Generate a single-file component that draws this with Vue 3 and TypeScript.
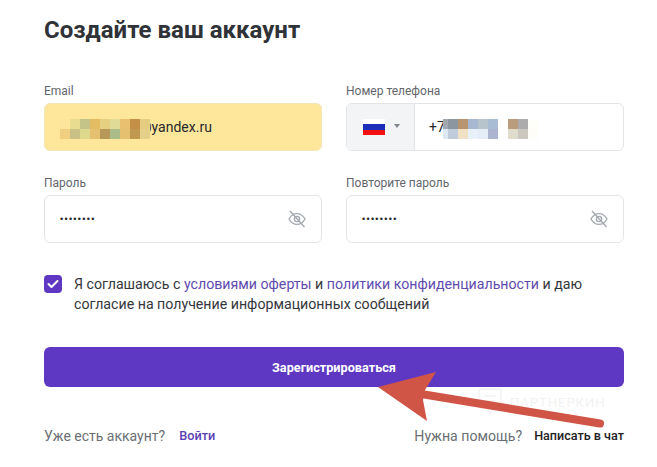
<script setup lang="ts">
// цвета пикселизации (замазанные email и телефон)
const emailBlur = [
  '#fde59c', '#e8dc90', '#c4c488', '#e4bc64', '#e4d080', '#e0dc98', '#e8c070', '#c49048', '#e4cc80',
  '#f0d080', '#c8c084', '#dcd88c', '#e4c070', '#b89858', '#acbc88', '#e4c070', '#c09850', '#e4d088',
]
const phoneBlur = [
  '#a0a8b0', '#8c96a0', '#b89470', '#a8b8d0', '#b8c4cc', '#a8bcd4',
  '#dce8f4', '#c0ccdc', '#f0e0c4', '#e8f0fa', '#e4ecf6', '#acb4d0',
]
const phoneBlurTail = ['#b89c7c', '#acacac', '#fffffa', '#e0dccc', '#ccc8c0', '#fffdf8']
</script>

<template>
  <div class="page">
    <h1 class="title">Создайте ваш аккаунт</h1>

    <div class="fields">
      <div class="field">
        <label class="label">Email</label>
        <div class="input input-filled">
          <span class="blur blur-email">
            <i v-for="(c, i) in emailBlur" :key="i" :style="{ background: c }" />
          </span>
          <span class="value value-email">@yandex.ru</span>
        </div>
      </div>

      <div class="field">
        <label class="label">Номер телефона</label>
        <div class="input input-phone">
          <div class="country">
            <span class="flag"><i class="white" /><i class="blue" /><i class="red" /></span>
            <span class="caret" />
          </div>
          <span class="value value-phone">+7</span>
          <span class="blur blur-phone">
            <i v-for="(c, i) in phoneBlur" :key="i" :style="{ background: c }" />
          </span>
          <span class="blur blur-phone-tail">
            <i v-for="(c, i) in phoneBlurTail" :key="i" :style="{ background: c }" />
          </span>
        </div>
      </div>

      <div class="field">
        <label class="label">Пароль</label>
        <div class="input">
          <span class="dots">••••••••</span>
          <svg class="eye" width="20" height="20" viewBox="0 0 20 20" fill="none">
            <path d="M2 10c2-3.600 4.800-5.400 8-5.400s6 1.800 8 5.400c-2 3.600-4.800 5.400-8 5.400S4 13.600 2 10Z" />
            <circle cx="10" cy="10" r="2.600" />
            <path d="M3 2l14.500 16" />
          </svg>
        </div>
      </div>

      <div class="field">
        <label class="label">Повторите пароль</label>
        <div class="input">
          <span class="dots">••••••••</span>
          <svg class="eye" width="20" height="20" viewBox="0 0 20 20" fill="none">
            <path d="M2 10c2-3.600 4.800-5.400 8-5.400s6 1.800 8 5.400c-2 3.600-4.800 5.400-8 5.400S4 13.600 2 10Z" />
            <circle cx="10" cy="10" r="2.600" />
            <path d="M3 2l14.500 16" />
          </svg>
        </div>
      </div>
    </div>

    <div class="agree">
      <span class="check">
        <svg width="12" height="10" viewBox="0 0 12 10" fill="none">
          <path d="M1.500 5l3 3 6-6" stroke="#fff" stroke-width="2" stroke-linecap="round" stroke-linejoin="round" />
        </svg>
      </span>
      <p class="agree-text">
        Я соглашаюсь с <a class="link">условиями оферты</a> и <a class="link">политики конфиденциальности</a> и даю
        согласие на получение информационных сообщений
      </p>
    </div>

    <button class="submit">Зарегистрироваться</button>

    <div class="footer">
      <div class="footer-side">
        <span class="muted">Уже есть аккаунт?</span>
        <a class="login">Войти</a>
      </div>
      <div class="footer-side">
        <span class="muted help">Нужна помощь?</span>
        <a class="chat">Написать в чат</a>
      </div>
    </div>

    <!-- водяной знак и стрелка поверх скриншота -->
    <div class="watermark">
      <svg width="24" height="28" viewBox="0 0 24 28" fill="none" stroke="#f2f2f2" stroke-width="1.500">
        <rect x="1" y="1" width="22" height="19" rx="2" />
        <path d="M6 8h12M6 13h12M9 20l3 6 3-6" />
      </svg>
      <span>ПАРТНЕРКИН</span>
    </div>
    <svg class="arrow" width="657" height="467" viewBox="0 0 657 467">
      <path d="M418 393.500L600 423.500" stroke="#d15546" stroke-width="8" stroke-linecap="round" fill="none" />
      <polygon points="378,387 436,372 425,390 423,400 427,421" fill="#d15546" />
    </svg>
  </div>
</template>

<style>
html, body {
  margin: 0;
  background: #fff;
}
</style>

<style scoped>
.page {
  position: relative;
  width: 657px;
  height: 467px;
  padding: 16px 33px 0 44px;
  box-sizing: border-box;
  overflow: hidden;
  font-family: Roboto, "Liberation Sans", sans-serif;
  color: #2b2f36;
}

.title {
  margin: 0;
  font-size: 24px;
  line-height: 28px;
  font-weight: 700;
  color: #2f3237;
}

.fields {
  display: grid;
  grid-template-columns: 278px 278px;
  column-gap: 24px;
  row-gap: 25px;
  margin-top: 40px;
}

.label {
  display: block;
  font-size: 12px;
  line-height: 14px;
  margin-bottom: 5px;
  color: #62666c;
}

.input {
  display: flex;
  align-items: center;
  height: 48px;
  box-sizing: border-box;
  padding: 0 14px 0 15px;
  border: 1px solid #e3e4e6;
  border-radius: 6px;
  background: #fff;
}

.input-filled {
  background: #fee79b;
  border-color: #f0e6b8;
}

.input-phone {
  padding: 0;
  overflow: hidden;
}

.value {
  font-size: 14px;
  color: #26282c;
}

.value-email {
  margin-left: -11px;
}

.value-phone {
  margin-left: 14px;
}

.country {
  display: flex;
  align-items: center;
  width: 68px;
  height: 100%;
  box-sizing: border-box;
  padding-left: 16px;
  background: #f3f4f6;
  border-right: 1px solid #e3e4e6;
}

.flag {
  display: flex;
  flex-direction: column;
  width: 22px;
  height: 16px;
}

.flag i {
  flex: 1;
}

.flag .white { background: #fff; }
.flag .blue { background: #1c2fb8; }
.flag .red { background: #f21010; }

.caret {
  width: 0;
  height: 0;
  margin-left: 9px;
  margin-bottom: 3px;
  border-left: 3px solid transparent;
  border-right: 3px solid transparent;
  border-top: 4px solid #7f858c;
}

/* пикселизация лежит поверх текста значения */
.blur {
  position: relative;
  z-index: 1;
  display: grid;
  grid-auto-rows: 10px;
  flex: none;
  margin-top: 4px;
}

.blur i {
  display: block;
}

.blur-email {
  grid-template-columns: repeat(9, 10px);
}

.blur-phone {
  grid-template-columns: 5px repeat(5, 10px);
  margin-left: -2px;
}

.blur-phone-tail {
  grid-template-columns: repeat(3, 10px);
  margin-left: 10px;
}

.dots {
  font-family: "Liberation Sans", sans-serif;
  font-size: 9px;
  letter-spacing: 1.300px;
  color: #26282c;
}

.eye {
  margin-left: auto;
}

.eye path,
.eye circle {
  stroke: #a6abb2;
  stroke-width: 1.400;
}

.agree {
  display: flex;
  align-items: flex-start;
  margin-top: 32px;
}

.check {
  display: flex;
  align-items: center;
  justify-content: center;
  flex: none;
  width: 18px;
  height: 18px;
  border-radius: 4px;
  background: #5e38c2;
  margin-right: 12px;
}

.agree-text {
  margin: -1px 0 0;
  font-size: 14.180px;
  line-height: 20px;
  color: #33363b;
}

.link {
  color: #5f4bb0;
}

.submit {
  display: block;
  width: 580px;
  height: 40px;
  margin-top: 33px;
  padding: 0;
  border: 0;
  border-radius: 6px;
  background: #5e38c2;
  color: #fff;
  font-family: inherit;
  font-size: 12.700px;
  font-weight: 700;
}

.footer {
  display: flex;
  justify-content: space-between;
  margin-top: 41px;
  line-height: 16px;
}

.footer-side {
  display: flex;
  align-items: center;
}

.muted {
  font-size: 14px;
  color: #6b6f75;
}

.help {
  font-size: 14.150px;
}

.login {
  margin-left: 14px;
  font-size: 12.700px;
  font-weight: 500;
  color: #5b3fb5;
}

.chat {
  margin-left: 12px;
  font-size: 12.600px;
  font-weight: 500;
  color: #1e2024;
}

.watermark {
  position: absolute;
  left: 478px;
  top: 388px;
  display: flex;
  align-items: center;
  gap: 8px;
  font-size: 13px;
  letter-spacing: 1px;
  color: #f2f2f2;
}

.arrow {
  position: absolute;
  left: 0;
  top: 0;
  pointer-events: none;
}
</style>
